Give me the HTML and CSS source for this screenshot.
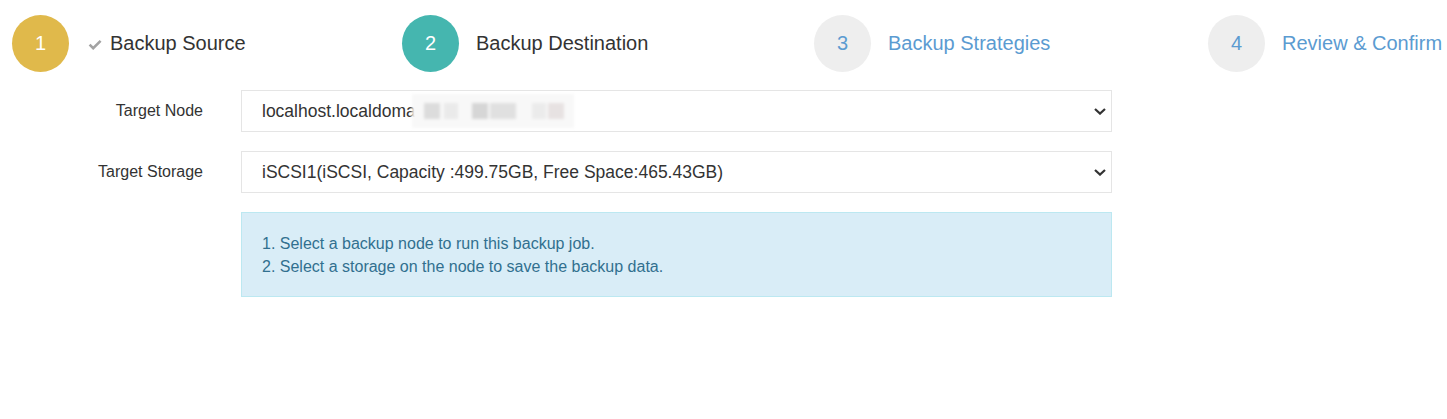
FILE: index.html
```html
<!DOCTYPE html>
<html lang="en">
<head>
<meta charset="utf-8">
<title>Backup Destination</title>
<link rel="stylesheet" href="styles.css">
</head>
<body>
<div class="wizard">
  <div class="steps">
    <div class="step done">
      <span class="number">1</span>
      <span class="desc"><svg class="check" width="14" height="11" viewBox="0 0 14 11"><polyline points="1.6,5.6 5.2,9.2 12.6,1.8" fill="none" stroke="#a3a3a3" stroke-width="2.6"/></svg>Backup Source</span>
    </div>
    <div class="step active">
      <span class="number">2</span>
      <span class="desc">Backup Destination</span>
    </div>
    <div class="step">
      <span class="number">3</span>
      <span class="desc">Backup Strategies</span>
    </div>
    <div class="step">
      <span class="number">4</span>
      <span class="desc">Review &amp; Confirm</span>
    </div>
  </div>

  <div class="form">
    <div class="row">
      <label class="label">Target Node</label>
      <div class="select">
        <span class="value">localhost.localdoma<span class="blur"><i class="b1"></i><i class="b2"></i><i class="b3"></i><i class="b4"></i><i class="b5"></i><i class="b6"></i></span></span>
        <svg class="chev" width="12" height="7" viewBox="0 0 12 7"><polyline points="1,1 6,5.6 11,1" fill="none" stroke="#333" stroke-width="2.2"/></svg>
      </div>
    </div>
    <div class="row">
      <label class="label">Target Storage</label>
      <div class="select">
        <span class="value">iSCSI1(iSCSI, Capacity :499.75GB, Free Space:465.43GB)</span>
        <svg class="chev" width="12" height="7" viewBox="0 0 12 7"><polyline points="1,1 6,5.6 11,1" fill="none" stroke="#333" stroke-width="2.2"/></svg>
      </div>
    </div>
    <div class="row">
      <span class="label"></span>
      <div class="alert">
        <div>1. Select a backup node to run this backup job.</div>
        <div>2. Select a storage on the node to save the backup data.</div>
      </div>
    </div>
  </div>
</div>
</body>
</html>
```

FILE: styles.css
```css
html, body {
  margin: 0;
  padding: 0;
  background: #fff;
}

body {
  font-family: "Liberation Sans", Arial, sans-serif;
  color: #333;
}

.steps {
  display: grid;
  grid-template-columns: 390px 412px 394px auto;
  align-items: center;
  padding: 15px 0 0 12px;
}

.step {
  display: flex;
  align-items: center;
  white-space: nowrap;
}

.number {
  flex: none;
  width: 57px;
  height: 57px;
  border-radius: 50%;
  background: #eeeeee;
  color: #5b9bd1;
  font-size: 20px;
  display: flex;
  align-items: center;
  justify-content: center;
  margin-right: 17px;
}

.desc {
  font-size: 20px;
  color: #5b9bd1;
  display: flex;
  align-items: center;
}

.step.done .number {
  background: #e0b94b;
  color: #fff;
}

.step.active .number {
  background: #45b6af;
  color: #fff;
}

.step.done .desc,
.step.active .desc {
  color: #333;
}

.check {
  margin-left: 2px;
  margin-right: 8px;
  margin-top: 1px;
}

.form {
  margin-top: 18px;
}

.row {
  display: grid;
  grid-template-columns: 203px 871px;
  column-gap: 38px;
  align-items: center;
  margin-bottom: 19px;
}

.label {
  text-align: right;
  font-size: 16px;
  color: #333;
}

.select {
  height: 42px;
  box-sizing: border-box;
  border: 1px solid #e5e5e5;
  display: flex;
  align-items: center;
  justify-content: space-between;
  padding: 0 5px 0 20px;
  font-size: 17.5px;
  color: #333;
}

.value {
  display: flex;
  align-items: center;
  white-space: nowrap;
}

.blur {
  display: flex;
  align-items: center;
  height: 34px;
  padding: 0 10px;
  margin-left: -4px;
  background: #f8f8f8;
  filter: blur(1.5px);
}

.blur i {
  display: block;
  height: 16px;
}

.b1 { width: 16px; background: #dcdcdc; margin-left: 2px; }
.b2 { width: 14px; background: #eaeaea; margin-left: 4px; }
.b3 { width: 16px; background: #d6d6d6; margin-left: 14px; }
.b4 { width: 26px; background: #e0e0e0; margin-left: 2px; }
.b5 { width: 14px; background: #ebebeb; margin-left: 16px; }
.b6 { width: 16px; background: #e7e2e2; margin-left: 2px; }

.chev {
  flex: none;
}

.alert {
  box-sizing: border-box;
  background: #d9edf7;
  border: 1px solid #bce8f1;
  color: #31708f;
  font-size: 16px;
  line-height: 23px;
  padding: 19px 20px 18px 20px;
}
```
